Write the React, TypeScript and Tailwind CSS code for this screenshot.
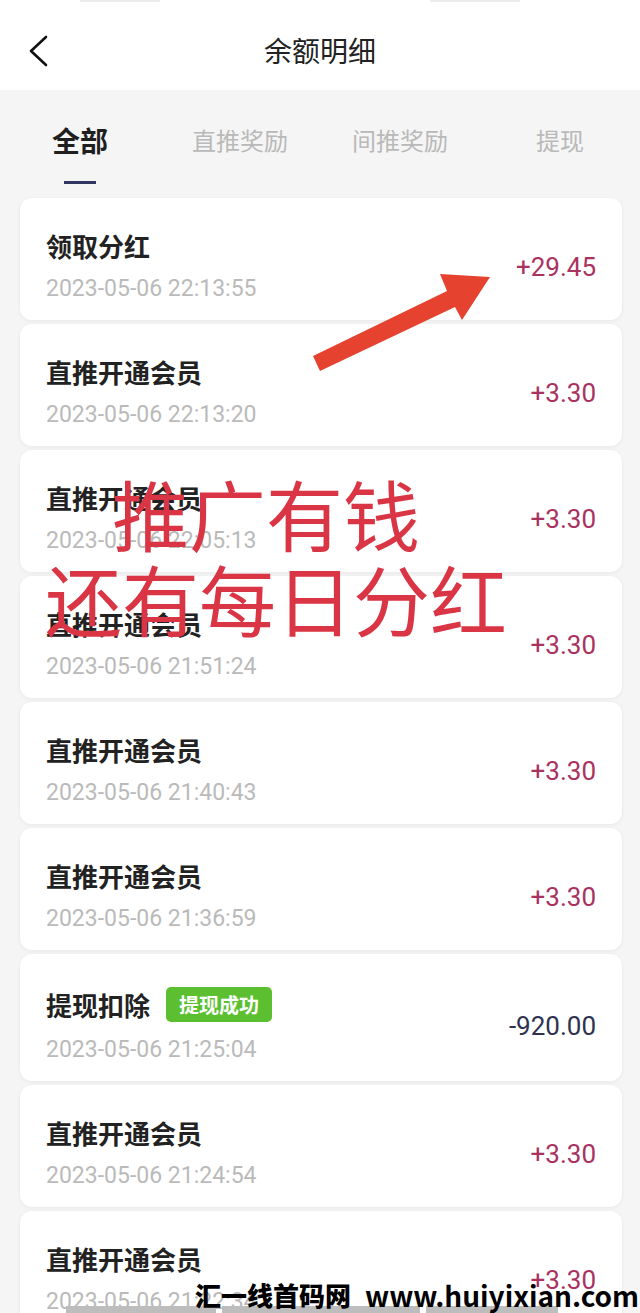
import React from "react";

type Row = {
  title: string;
  time: string;
  amount: string;
  badge?: string;
};

const rows: Row[] = [
  { title: "领取分红", time: "2023-05-06 22:13:55", amount: "+29.45" },
  { title: "直推开通会员", time: "2023-05-06 22:13:20", amount: "+3.30" },
  { title: "直推开通会员", time: "2023-05-06 22:05:13", amount: "+3.30" },
  { title: "直推开通会员", time: "2023-05-06 21:51:24", amount: "+3.30" },
  { title: "直推开通会员", time: "2023-05-06 21:40:43", amount: "+3.30" },
  { title: "直推开通会员", time: "2023-05-06 21:36:59", amount: "+3.30" },
  { title: "提现扣除", time: "2023-05-06 21:25:04", amount: "-920.00", badge: "提现成功" },
  { title: "直推开通会员", time: "2023-05-06 21:24:54", amount: "+3.30" },
  { title: "直推开通会员", time: "2023-05-06 21:22:34", amount: "+3.30" },
  { title: "直推开通会员", time: "2023-05-06 21:20:11", amount: "+3.30" },
];

const tabs = ["全部", "直推奖励", "间推奖励", "提现"];

const cjk = "font-['Noto_Sans_CJK_SC',sans-serif]";
const num = "font-['Roboto','Noto_Sans_CJK_SC',sans-serif]";

const BalanceRow = ({ row }: { row: Row }) => {
  const negative = row.amount.startsWith("-");
  return (
    <div className="flex items-center justify-between rounded-[12px] bg-white pl-[26px] pr-[26px] pt-[33px] pb-[17px] shadow-[0_1px_4px_rgba(0,0,0,0.06)]">
      <div className="flex flex-col">
        <div className="flex items-center">
          <span className={`${cjk} text-[26px] leading-[30px] font-semibold text-[#222]`}>
            {row.title}
          </span>
          {row.badge && (
            <span
              className={`${cjk} ml-[16px] flex h-[35px] items-center rounded-[5px] bg-[#5bbf30] px-[13px] text-[20px] font-semibold text-white`}
            >
              {row.badge}
            </span>
          )}
        </div>
        <span className={`${num} mt-[14px] text-[23px] leading-[28px] text-[#bababa]`}>
          {row.time}
        </span>
      </div>
      <span
        className={`${num} text-[26px] leading-[30px] ${
          negative ? "text-[#2d3250]" : "text-[#a93260]"
        }`}
      >
        {row.amount}
      </span>
    </div>
  );
};

export default function App() {
  return (
    <div className="relative h-[1313px] w-[640px] overflow-hidden bg-[#f5f5f5]">
      {/* header */}
      <div className="relative flex h-[90px] items-center justify-center bg-white pt-[10px]">
        <div className="absolute left-[80px] top-0 h-[2px] w-[80px] bg-[#ededed]" />
        <div className="absolute left-[430px] top-0 h-[2px] w-[90px] bg-[#ededed]" />
        <svg
          className="absolute left-[24px] top-[32px]"
          width="30"
          height="38"
          viewBox="0 0 30 38"
          fill="none"
        >
          <polyline
            points="22,5 7,19 22,33"
            stroke="#111"
            strokeWidth="2.6"
            strokeLinecap="round"
            strokeLinejoin="round"
          />
        </svg>
        <span className={`${cjk} text-[28px] leading-[34px] text-[#222]`}>余额明细</span>
      </div>

      {/* tabs */}
      <div className="grid h-[108px] grid-cols-4">
        {tabs.map((t, i) => (
          <div key={t} className="flex flex-col items-center pt-[32px]">
            <span
              className={`${cjk} leading-[36px] ${
                i === 0
                  ? "text-[28px] font-bold text-[#1f1f1f]"
                  : "text-[24px] text-[#b9b9b9]"
              }`}
            >
              {t}
            </span>
            {i === 0 && <div className="mt-[23px] h-[3px] w-[32px] bg-[#2f3660]" />}
          </div>
        ))}
      </div>

      {/* list */}
      <div className="flex flex-col gap-[4px] pl-[20px] pr-[18px]">
        {rows.map((r, i) => (
          <BalanceRow key={i} row={r} />
        ))}
      </div>

      {/* red overlay arrow */}
      <svg
        className="absolute left-0 top-0"
        width="640"
        height="400"
        viewBox="0 0 640 400"
      >
        <polygon
          points="313,356 447,291 440,274 490,277 462,320 455,307 320,371"
          fill="#e5432f"
        />
      </svg>

      {/* red overlay text */}
      <div
        className={`${cjk} absolute left-[112px] top-[474px] text-[77px] leading-[77px] text-[#da3544]`}
      >
        推广有钱
      </div>
      <div
        className={`${cjk} absolute left-[45px] top-[559px] text-[77px] leading-[77px] text-[#da3544]`}
      >
        还有每日分红
      </div>

      {/* bottom watermark */}
      <div className="absolute left-[66px] top-[1306px] flex gap-[6px]">
        <div className="h-[7px] w-[150px] bg-[#bdbdbd]" />
        <div className="h-[7px] w-[198px] bg-[#bdbdbd]" />
        <div className="h-[7px] w-[132px] bg-[#bdbdbd]" />
      </div>
      <div
        className={`${cjk} absolute left-[195px] top-[1278px] flex items-center gap-[14px] text-[26px] leading-[34px] font-black text-black`}
      >
        <span>汇一线首码网</span>
        <span className="text-[28px] font-bold">www.huiyixian.com</span>
      </div>
    </div>
  );
}
